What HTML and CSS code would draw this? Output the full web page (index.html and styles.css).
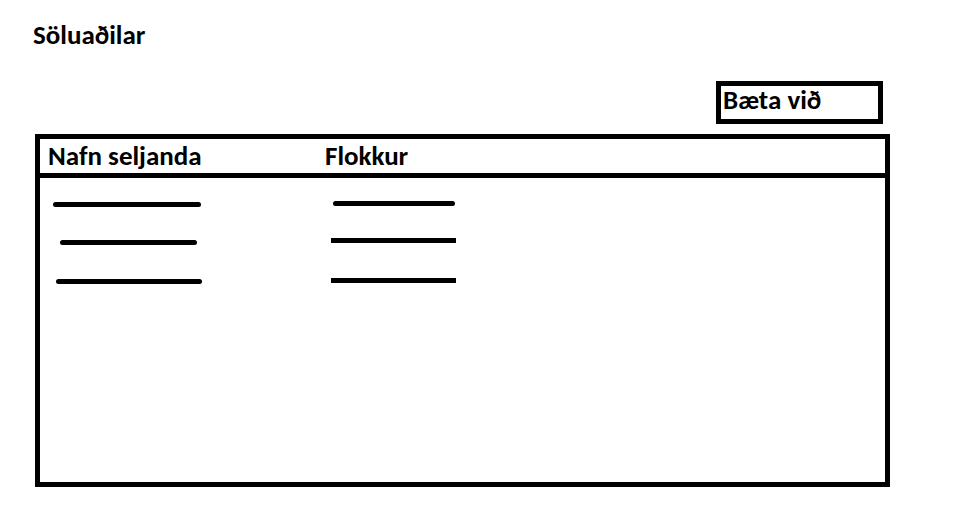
FILE: index.html
```html
<!DOCTYPE html>
<html lang="is">
<head>
<meta charset="utf-8">
<title>Söluaðilar</title>
<link rel="stylesheet" href="styles.css">
</head>
<body>
<header class="header">
  <h1 class="title">Söluaðilar</h1>
</header>
<main class="page">
  <div class="toolbar"><button class="add" type="button">Bæta við</button></div>
  <div class="panel">
    <table class="sellers">
      <colgroup><col class="col-name"><col></colgroup>
      <thead>
        <tr><th scope="col">Nafn seljanda</th><th scope="col">Flokkur</th></tr>
      </thead>
      <tbody>
        <tr>
          <td><svg class="stroke" width="160" height="6"><path d="M7.500 3.500H150.500"/></svg></td>
          <td><svg class="stroke" width="160" height="6"><path d="M10.500 2.500H127.500"/></svg></td>
        </tr>
        <tr>
          <td><svg class="stroke" width="160" height="6"><path d="M14.500 3.500H146.500"/></svg></td>
          <td><svg class="stroke flat" width="160" height="6"><path d="M6 1.500H131"/></svg></td>
        </tr>
        <tr>
          <td><svg class="stroke" width="160" height="6"><path d="M10.500 4.500H151.500"/></svg></td>
          <td><svg class="stroke flat" width="160" height="6"><path d="M6 3.500H131"/></svg></td>
        </tr>
      </tbody>
    </table>
  </div>
</main>
</body>
</html>
```
FILE: styles.css
```css
* {
  box-sizing: border-box;
}

body {
  margin: 0;
  background: #fff;
  color: #000;
  font-family: Calibri, Carlito, Lato, "Open Sans", sans-serif;
  font-size: 27px;
  font-weight: 700;
  line-height: 32px;
}

.header {
  padding: 19px 33px 0;
}

.title {
  margin: 0;
  font-size: inherit;
  line-height: inherit;
}

.page {
  padding: 30px 65px 18px 35px;
}

.toolbar {
  display: flex;
  justify-content: flex-end;
  margin: 0 7px 10px 0;
}

.add {
  width: 167px;
  height: 43px;
  padding: 0 2px 6px;
  border: 5px solid #000;
  background: #fff;
  color: inherit;
  font: inherit;
  line-height: 28px;
  text-align: left;
}

.panel {
  min-height: 353px;
  border: 5px solid #000;
}

.sellers {
  width: 100%;
  border-spacing: 0;
  table-layout: fixed;
}

.col-name {
  width: 277px;
}

.sellers th {
  height: 39px;
  padding: 0 8px;
  border-bottom: 5px solid #000;
  text-align: left;
}

.sellers td {
  padding: 23px 8px 9px;
}

.stroke {
  display: block;
  overflow: visible;
  fill: none;
  stroke: #000;
  stroke-width: 5;
  stroke-linecap: round;
}

.flat {
  stroke-linecap: butt;
}
```
